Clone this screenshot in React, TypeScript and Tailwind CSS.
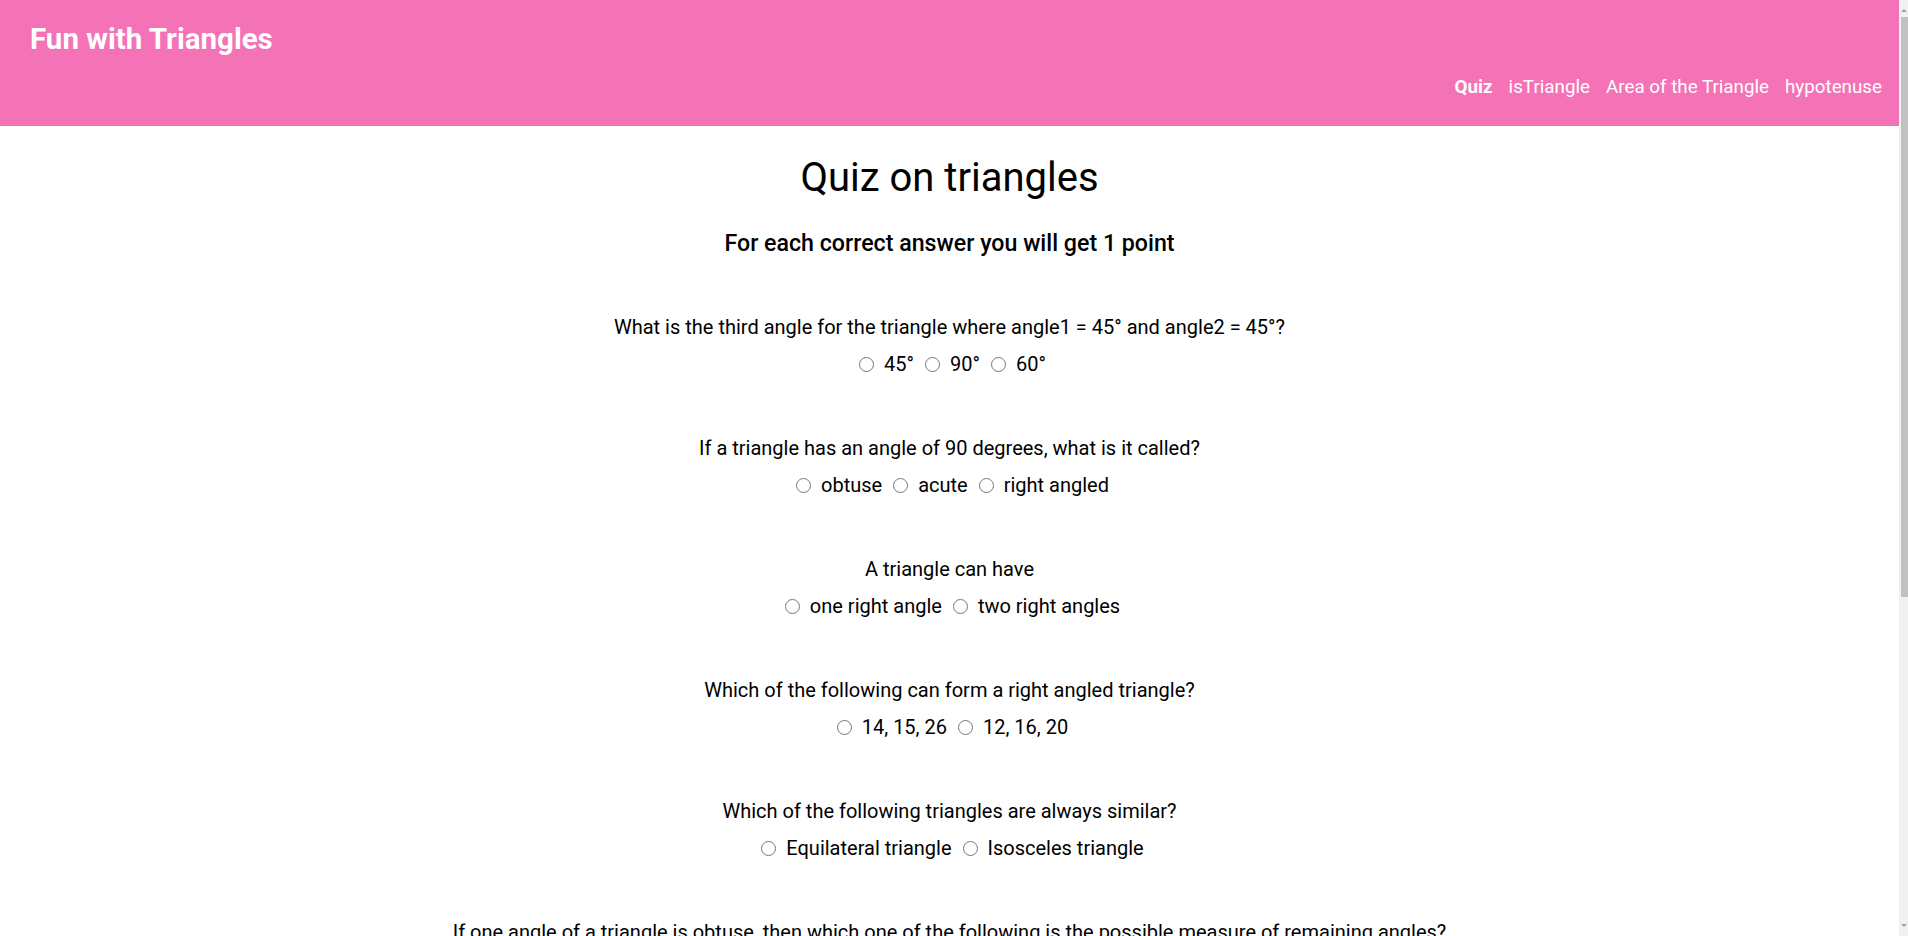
const questions = [
  {
    q: "What is the third angle for the triangle where angle1 = 45° and angle2 = 45°?",
    options: ["45°", "90°", "60°"],
  },
  {
    q: "If a triangle has an angle of 90 degrees, what is it called?",
    options: ["obtuse", "acute", "right angled"],
  },
  {
    q: "A triangle can have",
    options: ["one right angle", "two right angles"],
  },
  {
    q: "Which of the following can form a right angled triangle?",
    options: ["14, 15, 26", "12, 16, 20"],
  },
  {
    q: "Which of the following triangles are always similar?",
    options: ["Equilateral triangle", "Isosceles triangle"],
  },
  {
    q: "If one angle of a triangle is obtuse, then which one of the following is the possible measure of remaining angles?",
    options: ["85°, 35°", "45°, 45°", "25°, 50°"],
  },
  {
    q: "If two angles of a triangle are 60° each, then the triangle is",
    options: ["Isosceles but not equilateral", "Scalene", "Equilateral"],
  },
];

function Question({ q, options, idx }: { q: string; options: string[]; idx: number }) {
  return (
    <div className="flex flex-col items-center mt-[56px] first:mt-[60px]">
      <p className="text-[20px] leading-[28px]">{q}</p>
      <div className="flex items-center gap-[11px] mt-[9px] pl-[6px] text-[20px] leading-[28px]">
        {options.map((o) => (
          <label key={o} className="inline-flex items-center">
            <input type="radio" name={`q${idx}`} value={o} className="w-[15px] h-[15px] m-0 mr-[10px]" />
            <span>{o}</span>
          </label>
        ))}
      </div>
    </div>
  );
}

// fake classic scrollbar so the layout width matches the screenshot
function Scrollbar() {
  return (
    <div className="w-[9px] shrink-0 bg-[#f1f1f1] flex flex-col items-end">
      <div className="w-0 h-0 mt-[9px] mr-[1px] border-l-[3px] border-r-[3px] border-b-[3px] border-l-transparent border-r-transparent border-b-[#a3a3a3]" />
      <div className="w-[7px] h-[580px] mt-[5px] bg-[#c1c1c1]" />
      <div className="flex-1" />
      <div className="w-0 h-0 mb-[9px] mr-[1px] border-l-[3px] border-r-[3px] border-t-[3px] border-l-transparent border-r-transparent border-t-[#a3a3a3]" />
    </div>
  );
}

export default function App() {
  return (
    <div className="h-screen flex bg-white text-black overflow-hidden" style={{ fontFamily: "Roboto, 'Liberation Sans', sans-serif" }}>
      <div className="flex-1 min-w-0 overflow-hidden">
        <header className="h-[126px] bg-[#f472b6] text-white flex flex-col pl-[30px] pr-[17px]">
          <h1 className="text-[29.5px] font-bold leading-[36px] mt-[21px]">Fun with Triangles</h1>
          <nav className="flex justify-end gap-[16px] text-[18.8px] leading-[26px] mt-[17px]">
            <a className="font-bold" href="#">Quiz</a>
            <a href="#">isTriangle</a>
            <a href="#">Area of the Triangle</a>
            <a href="#">hypotenuse</a>
          </nav>
        </header>
        <main className="flex flex-col items-center text-center pb-[60px]">
          <h1 className="text-[40px] leading-[48px] mt-[28px]">Quiz on triangles</h1>
          <h2 className="text-[23.2px] font-medium leading-[28px] mt-[27px]">
            For each correct answer you will get 1 point
          </h2>
          {questions.map((item, i) => (
            <Question key={i} q={item.q} options={item.options} idx={i} />
          ))}
        </main>
      </div>
      <Scrollbar />
    </div>
  );
}
